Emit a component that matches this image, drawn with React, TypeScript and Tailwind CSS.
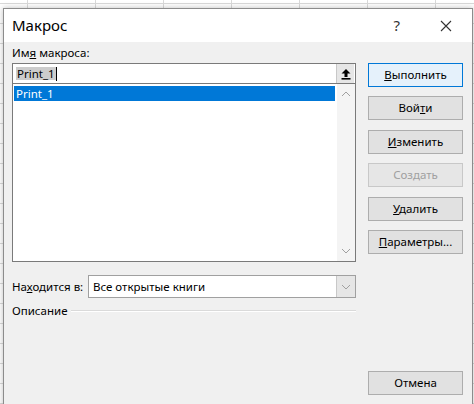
import React from "react";

const FONT = { fontFamily: '"Noto Sans", "Open Sans", sans-serif' };

function UploadIcon() {
  return (
    <svg width="10" height="12" viewBox="0 0 10 12">
      <path d="M5 1 L9.5 5.5 L6.5 5.5 L6.5 9 L3.5 9 L3.5 5.5 L0.5 5.5 Z" fill="#000" />
      <rect x="0.5" y="10" width="9" height="1.6" fill="#000" />
    </svg>
  );
}

function Chevron({ up = false }: { up?: boolean }) {
  return (
    <svg width="10" height="6" viewBox="0 0 10 6">
      <path
        d={up ? "M1 5 L5 1 L9 5" : "M1 1 L5 5 L9 1"}
        fill="none"
        stroke="#a0a0a0"
        strokeWidth="1"
      />
    </svg>
  );
}

function DlgButton({
  children,
  primary = false,
  disabled = false,
}: {
  children: React.ReactNode;
  primary?: boolean;
  disabled?: boolean;
}) {
  const base = "h-[24px] w-full flex items-center justify-center text-[11.5px] border";
  const look = primary
    ? "bg-[#e5f1fb] border-[#0078d7] text-black"
    : disabled
      ? "bg-[#e6e6e6] border-[#c8c8c8] text-[#a0a0a0]"
      : "bg-[#e1e1e1] border-[#adadad] text-black";
  return <div className={`${base} ${look}`}>{children}</div>;
}

export default function App() {
  return (
    <div
      style={FONT}
      className="w-[474px] h-[404px] overflow-hidden bg-white bg-[linear-gradient(to_right,#d9d9d9_1px,transparent_1px),linear-gradient(to_bottom,#d9d9d9_1px,transparent_1px)] bg-[size:68px_20px] bg-[position:27px_3px] pt-[8px] pl-[3px]"
    >
      <div className="w-[470px] h-[400px] flex flex-col border-x border-t border-[#8c8c8c] shadow-[0_0_6px_rgba(0,0,0,0.25)]">
        {/* Title bar */}
        <div className="h-[33px] bg-white flex items-center pl-[8px] shrink-0">
          <span className="text-[15px] text-black">Макрос</span>
          <span className="ml-auto text-[15px] text-[#333]">?</span>
          <svg className="ml-[40px] mr-[20px]" width="12" height="12" viewBox="0 0 12 12">
            <path d="M1 1 L11 11 M11 1 L1 11" stroke="#333" strokeWidth="1.1" />
          </svg>
        </div>

        {/* Body */}
        <div className="flex-1 bg-[#f0f0f0] flex pl-[8px] pr-[9px] text-[11.5px] text-black">
          {/* Left column */}
          <div className="w-[344px] flex flex-col">
            <div className="h-[16px] leading-[16px] mt-[3px]">
              Им<span className="underline">я</span> макроса:
            </div>

            <div className="mt-[2px] h-[21px] border border-[#7a7a7a] bg-white flex items-center">
              <span className="ml-[3px] bg-[#cccccc] leading-[13px] h-[13px] px-[1px]">Print_1</span>
              <span className="w-[1px] h-[14px] bg-black" />
              <div className="ml-auto mr-[1px] h-[19px] w-[18px] bg-[#e6e6e6] border-l border-[#c8c8c8] flex items-center justify-center">
                <UploadIcon />
              </div>
            </div>

            <div className="h-[178px] border-x border-b border-[#7a7a7a] bg-white flex">
              <div className="flex-1 pt-[2px] pl-[1px] pr-[2px]">
                <div className="h-[15px] leading-[15px] bg-[#0078d7] text-white pl-[2px]">Print_1</div>
              </div>
              <div className="w-[18px] bg-[#f4f4f4] flex flex-col items-center justify-between py-[7px]">
                <Chevron up />
                <Chevron />
              </div>
            </div>

            <div className="mt-[13px] flex items-center h-[23px]">
              <span className="w-[76px]">
                На<span className="underline">х</span>одится в:
              </span>
              <div className="flex-1 h-[23px] border border-[#a0a0a0] bg-white flex items-center">
                <span className="ml-[4px]">Все открытые книги</span>
                <div className="ml-auto h-full w-[19px] bg-[#e6e6e6] border-l border-[#c8c8c8] flex items-center justify-center">
                  <Chevron />
                </div>
              </div>
            </div>

            <div className="mt-[5px] h-[16px] flex items-center">
              <span className="leading-[16px]">Описание</span>
              <div className="flex-1 ml-[4px] border-t border-[#dadada] border-b border-b-white" />
            </div>
          </div>

          {/* Right column */}
          <div className="w-[95px] ml-[12px] flex flex-col pt-[21px]">
            <DlgButton primary>
              <span><span className="underline">В</span>ыполнить</span>
            </DlgButton>
            <div className="mt-[9px]">
              <DlgButton>
                <span>Вой<span className="underline">т</span>и</span>
              </DlgButton>
            </div>
            <div className="mt-[10px]">
              <DlgButton>
                <span><span className="underline">И</span>зменить</span>
              </DlgButton>
            </div>
            <div className="mt-[9px]">
              <DlgButton disabled>
                <span>Создать</span>
              </DlgButton>
            </div>
            <div className="mt-[10px]">
              <DlgButton>
                <span><span className="underline">У</span>далить</span>
              </DlgButton>
            </div>
            <div className="mt-[9px]">
              <DlgButton>
                <span><span className="underline">П</span>араметры...</span>
              </DlgButton>
            </div>
            <div className="mt-[117px]">
              <DlgButton>
                <span>Отмена</span>
              </DlgButton>
            </div>
          </div>
        </div>
      </div>
    </div>
  );
}
